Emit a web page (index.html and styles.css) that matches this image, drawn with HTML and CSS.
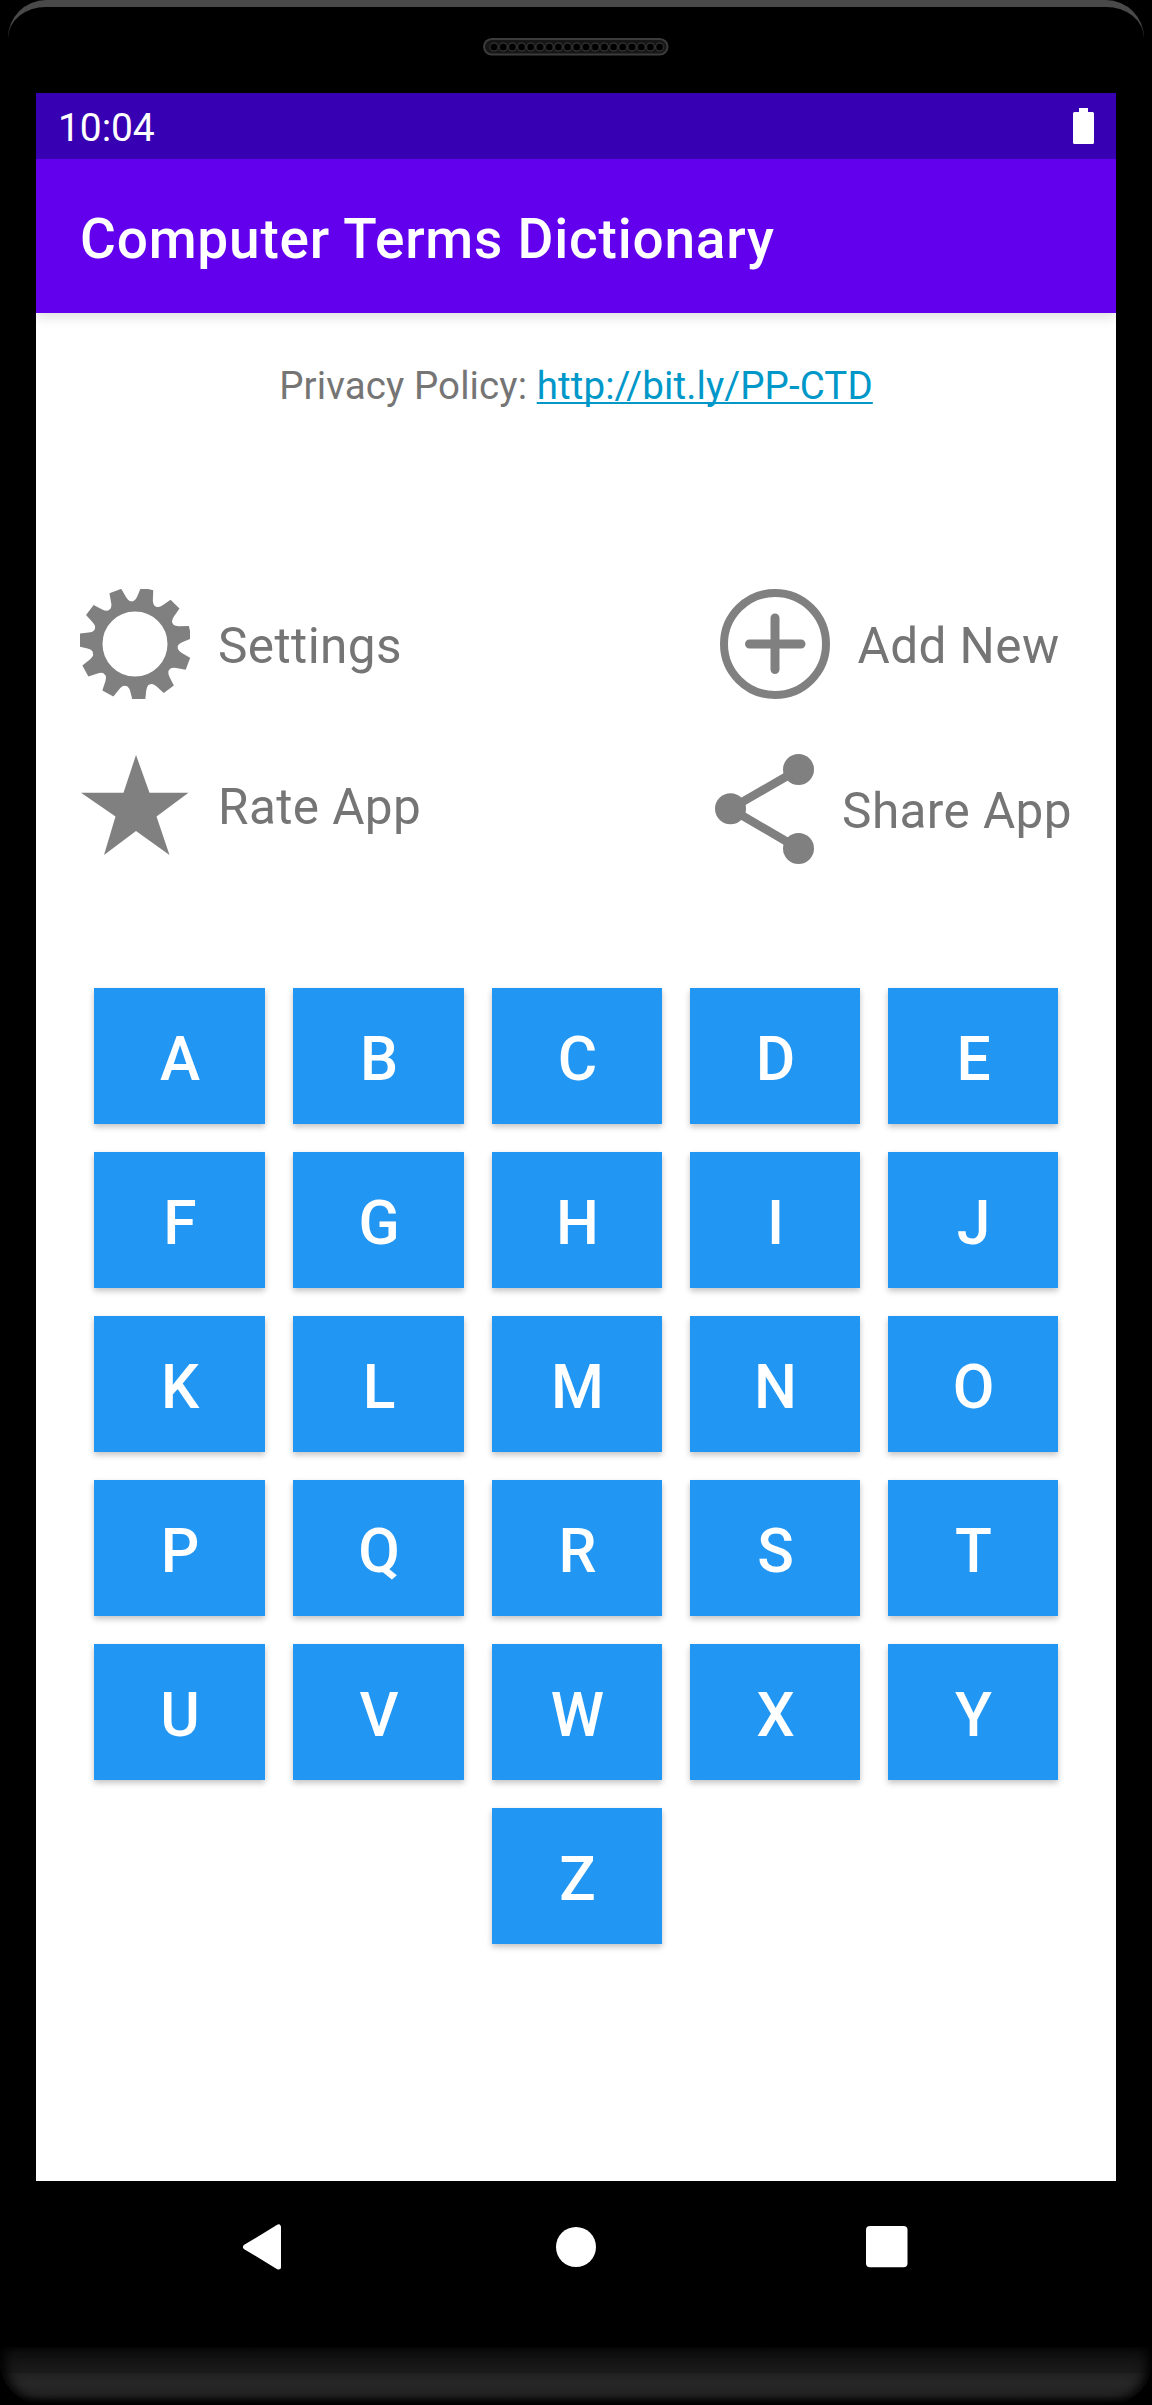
FILE: index.html
```html
<!DOCTYPE html>
<html lang="en">
<head>
<meta charset="utf-8">
<title>Computer Terms Dictionary</title>
<link rel="stylesheet" href="styles.css">
</head>
<body>
<div class="phone">
  <div class="phone-top">
    <svg class="speaker" width="186" height="18" viewBox="0 0 186 18">
      <defs>
        <pattern id="holes" x="6.400" y="0" width="9.200" height="18" patternUnits="userSpaceOnUse">
          <circle cx="4.600" cy="9" r="4" fill="#000" stroke="#3a3a3a" stroke-width="1"/>
        </pattern>
      </defs>
      <rect x="1" y="1" width="183.500" height="15.500" rx="7.750" fill="#161616" stroke="#3c3c3c" stroke-width="2"/>
      <rect x="6.400" y="3" width="174.800" height="12" fill="url(#holes)"/>
    </svg>
  </div>

  <div class="screen">
    <header class="status-bar">
      <span class="clock">10:04</span>
      <svg class="battery" width="21" height="36" viewBox="0 0 21 36">
        <path d="M6 0h9v4h4.500a1.500 1.500 0 0 1 1.500 1.500v29a1.500 1.500 0 0 1-1.500 1.500h-18a1.500 1.500 0 0 1-1.500-1.500v-29a1.500 1.500 0 0 1 1.500-1.500h4.500z" fill="#fff"/>
      </svg>
    </header>
    <div class="app-bar"><h1 class="title">Computer Terms Dictionary</h1></div>

    <main class="content">
      <p class="privacy">Privacy Policy: <a class="link" href="#">http://bit.ly/PP-CTD</a></p>

      <div class="actions">
        <div class="action-column">
          <div class="action">
            <svg width="110" height="110" viewBox="0 0 110 110" fill="#808080">
              <defs><path id="tooth" d="M-11-41Q-8.300-44-8-47L-6.300-56.500H6.300L8-47Q8.300-44 11-41Z"/></defs>
              <circle cx="55" cy="55" r="37.750" fill="none" stroke="#808080" stroke-width="10.500"/>
              <g transform="translate(55 55) rotate(176)">
                <use href="#tooth"/>
                <use href="#tooth" transform="rotate(32.727)"/>
                <use href="#tooth" transform="rotate(65.455)"/>
                <use href="#tooth" transform="rotate(98.182)"/>
                <use href="#tooth" transform="rotate(130.909)"/>
                <use href="#tooth" transform="rotate(163.636)"/>
                <use href="#tooth" transform="rotate(196.364)"/>
                <use href="#tooth" transform="rotate(229.091)"/>
                <use href="#tooth" transform="rotate(261.818)"/>
                <use href="#tooth" transform="rotate(294.545)"/>
                <use href="#tooth" transform="rotate(327.273)"/>
              </g>
            </svg>
            <span>Settings</span>
          </div>
          <div class="action">
            <svg width="110" height="103" viewBox="0 0 110 103" fill="#808080">
              <path d="M56 1L69.500 38.700H108.500L76.500 62.500L89.500 101L56 77L24 101L35.500 62.500L1 38.700H43.500Z"/>
            </svg>
            <span>Rate App</span>
          </div>
        </div>
        <div class="action-column action-column-right">
          <div class="action action-add">
            <svg width="110" height="110" viewBox="0 0 110 110" fill="none" stroke="#808080">
              <circle cx="55" cy="55" r="51" stroke-width="8"/>
              <path d="M55 29V80.500M29.500 55H81" stroke-width="9" stroke-linecap="round"/>
            </svg>
            <span>Add New</span>
          </div>
          <div class="action">
            <svg width="99" height="110" viewBox="0 0 99 110" fill="#808080">
              <path d="M83.500 15.500L15.500 54.700L83.500 94.500" fill="none" stroke="#808080" stroke-width="8.500"/>
              <circle cx="83.500" cy="15.500" r="15.500"/>
              <circle cx="15.500" cy="54.700" r="15.500"/>
              <circle cx="83.500" cy="94.500" r="15.500"/>
            </svg>
            <span>Share App</span>
          </div>
        </div>
      </div>

      <div class="letters">
        <button class="letter">A</button>
        <button class="letter">B</button>
        <button class="letter">C</button>
        <button class="letter">D</button>
        <button class="letter">E</button>
        <button class="letter">F</button>
        <button class="letter">G</button>
        <button class="letter">H</button>
        <button class="letter">I</button>
        <button class="letter">J</button>
        <button class="letter">K</button>
        <button class="letter">L</button>
        <button class="letter">M</button>
        <button class="letter">N</button>
        <button class="letter">O</button>
        <button class="letter">P</button>
        <button class="letter">Q</button>
        <button class="letter">R</button>
        <button class="letter">S</button>
        <button class="letter">T</button>
        <button class="letter">U</button>
        <button class="letter">V</button>
        <button class="letter">W</button>
        <button class="letter">X</button>
        <button class="letter">Y</button>
        <button class="letter letter-last">Z</button>
      </div>
    </main>
  </div>

  <nav class="nav-bar">
    <svg width="44" height="46" viewBox="0 0 44 46"><path d="M3.500 23L36.500 3V43Z" fill="#fff" stroke="#fff" stroke-width="5" stroke-linejoin="round"/></svg>
    <svg width="40" height="40" viewBox="0 0 40 40"><circle cx="20" cy="20" r="20" fill="#fff"/></svg>
    <svg width="42" height="42" viewBox="0 0 42 42"><rect width="41.500" height="41.300" rx="4" fill="#fff"/></svg>
  </nav>
  <div class="phone-bottom"></div>
</div>
</body>
</html>
```

FILE: styles.css
```css
* {
  box-sizing: border-box;
}

body {
  margin: 0;
  background: #000;
  font-family: Roboto, "Liberation Sans", sans-serif;
}

.phone {
  display: flex;
  flex-direction: column;
  width: 1152px;
  height: 2405px;
  background: #000;
}

.phone-top {
  display: flex;
  justify-content: center;
  height: 93px;
  margin: 0 8px;
  padding-top: 31px;
  border-top: 7px solid #494949;
  border-radius: 38px 38px 0 0;
}

.screen {
  display: flex;
  flex-direction: column;
  height: 2088px;
  margin: 0 36px;
  background: #fff;
}

.status-bar {
  display: flex;
  justify-content: space-between;
  align-items: center;
  height: 66px;
  padding: 0 22px;
  background: #3700b3;
  color: #fff;
}

.clock {
  padding-top: 3px;
  font-size: 39px;
  letter-spacing: -0.1px;
  line-height: 46px;
}

.app-bar {
  display: flex;
  align-items: center;
  height: 154px;
  padding: 5px 44px 0;
  background: #6200ee;
  box-shadow: 0 4px 12px rgba(0, 0, 0, 0.13);
  clip-path: inset(0 0 -24px 0);
  color: #fff;
}

.title {
  margin: 0;
  font-size: 55px;
  font-weight: 500;
  letter-spacing: 0.78px;
}

.content {
  display: flex;
  flex-direction: column;
}

.privacy {
  margin: 50px 0 0;
  height: 46px;
  color: #757575;
  font-size: 38.5px;
  letter-spacing: 0.1px;
  line-height: 46px;
  text-align: center;
}

.link {
  color: #0097c9;
  text-decoration: underline;
  text-decoration-skip-ink: none;
  text-decoration-thickness: 2px;
  text-underline-offset: 3px;
}

.actions {
  display: flex;
  justify-content: space-between;
  margin-top: 180px;
  padding: 0 44px;
}

.action-column {
  display: flex;
  flex-direction: column;
  gap: 55px;
}

.action-column-right {
  align-items: flex-end;
}

.action {
  display: flex;
  align-items: center;
  gap: 28px;
  color: #757575;
  font-size: 49.5px;
  letter-spacing: 0.4px;
  line-height: 58px;
  white-space: nowrap;
}

.action span {
  padding-top: 3px;
}

.action-add {
  margin-right: 12.5px;
}

.letters {
  display: grid;
  grid-template-columns: 171px 171px 170px 170px 170px;
  grid-auto-rows: 136px;
  gap: 28px;
  margin: 124px 58px 0;
}

.letter {
  padding: 8px 0 0 1px;
  border: 0;
  background: #2196f3;
  box-shadow: 0 3px 6px rgba(0, 0, 0, 0.24);
  color: #fff;
  font-family: inherit;
  font-size: 60.5px;
  font-weight: 500;
  line-height: 70px;
}

.letter-last {
  grid-column: 3;
}

.nav-bar {
  display: flex;
  justify-content: space-between;
  align-items: center;
  height: 166px;
  padding: 0 244px 34px 242px;
}

.phone-bottom {
  height: 58px;
  border-radius: 0 0 44px 44px;
  background: linear-gradient(#0c0c0c 0, #1b1b1b 26px, #222 27px, #272727 37px, #212121 48px, #020202 57px);
  box-shadow: inset 8px 0 12px -3px #000, inset -8px 0 12px -3px #000;
}
```
